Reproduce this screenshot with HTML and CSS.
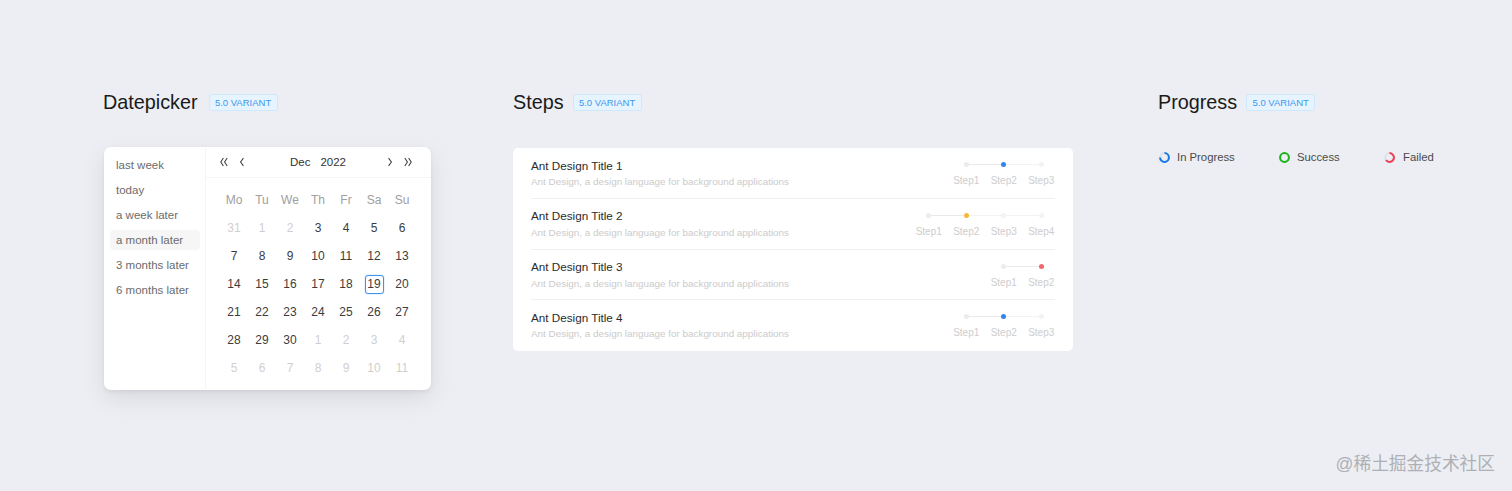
FILE: index.html
```html
<!DOCTYPE html>
<html lang="en">
<head>
  <meta charset="UTF-8">
  <title>Ant Design 5.0 variants</title>
  <link rel="stylesheet" href="styles.css">
</head>
<body>

  <div class="page">

    <section class="col col-date">
      <div class="heading">
        <h2>Datepicker</h2>
        <span class="tag">5.0 VARIANT</span>
      </div>

      <div class="picker">
        <ul class="presets">
          <li>last week</li>
          <li>today</li>
          <li>a week later</li>
          <li class="active">a month later</li>
          <li>3 months later</li>
          <li>6 months later</li>
        </ul>

        <div class="calendar">
          <div class="cal-head">
            <div class="cal-nav">
              <svg class="nav-icon" viewBox="0 0 10 10"><path d="M4.4 1 1.8 5l2.6 4M8.2 1 5.6 5l2.6 4"/></svg>
              <svg class="nav-icon" viewBox="0 0 10 10"><path d="M6.4 1.2 3.6 5l2.8 3.8"/></svg>
            </div>
            <div class="cal-title"><span>Dec</span><span>2022</span></div>
            <div class="cal-nav">
              <svg class="nav-icon" viewBox="0 0 10 10"><path d="M3.6 1.2 6.4 5 3.6 8.8"/></svg>
              <svg class="nav-icon" viewBox="0 0 10 10"><path d="M1.8 1 4.4 5 1.8 9M5.6 1 8.2 5 5.6 9"/></svg>
            </div>
          </div>

          <div class="cal-grid">
            <div class="wd">Mo</div><div class="wd">Tu</div><div class="wd">We</div><div class="wd">Th</div><div class="wd">Fr</div><div class="wd">Sa</div><div class="wd">Su</div>

            <div class="off">31</div><div class="off">1</div><div class="off">2</div><div>3</div><div>4</div><div>5</div><div>6</div>
            <div>7</div><div>8</div><div>9</div><div>10</div><div>11</div><div>12</div><div>13</div>
            <div>14</div><div>15</div><div>16</div><div>17</div><div>18</div><div><span class="today">19</span></div><div>20</div>
            <div>21</div><div>22</div><div>23</div><div>24</div><div>25</div><div>26</div><div>27</div>
            <div>28</div><div>29</div><div>30</div><div class="off">1</div><div class="off">2</div><div class="off">3</div><div class="off">4</div>
            <div class="off">5</div><div class="off">6</div><div class="off">7</div><div class="off">8</div><div class="off">9</div><div class="off">10</div><div class="off">11</div>
          </div>
        </div>
      </div>
    </section>

    <section class="col col-steps">
      <div class="heading">
        <h2>Steps</h2>
        <span class="tag">5.0 VARIANT</span>
      </div>

      <div class="list">
        <div class="row">
          <div class="row-text">
            <div class="row-title">Ant Design Title 1</div>
            <div class="row-desc">Ant Design, a design language for background applications</div>
          </div>
          <div class="steps">
            <div class="step done"><i><b></b></i><span>Step1</span></div>
            <div class="step now blue"><i><b></b></i><span>Step2</span></div>
            <div class="step"><i><b></b></i><span>Step3</span></div>
          </div>
        </div>

        <div class="row">
          <div class="row-text">
            <div class="row-title">Ant Design Title 2</div>
            <div class="row-desc">Ant Design, a design language for background applications</div>
          </div>
          <div class="steps">
            <div class="step done"><i><b></b></i><span>Step1</span></div>
            <div class="step now yellow"><i><b></b></i><span>Step2</span></div>
            <div class="step"><i><b></b></i><span>Step3</span></div>
            <div class="step"><i><b></b></i><span>Step4</span></div>
          </div>
        </div>

        <div class="row">
          <div class="row-text">
            <div class="row-title">Ant Design Title 3</div>
            <div class="row-desc">Ant Design, a design language for background applications</div>
          </div>
          <div class="steps">
            <div class="step done"><i><b></b></i><span>Step1</span></div>
            <div class="step now red"><i><b></b></i><span>Step2</span></div>
          </div>
        </div>

        <div class="row">
          <div class="row-text">
            <div class="row-title">Ant Design Title 4</div>
            <div class="row-desc">Ant Design, a design language for background applications</div>
          </div>
          <div class="steps">
            <div class="step done"><i><b></b></i><span>Step1</span></div>
            <div class="step now blue"><i><b></b></i><span>Step2</span></div>
            <div class="step"><i><b></b></i><span>Step3</span></div>
          </div>
        </div>
      </div>
    </section>

    <section class="col col-progress">
      <div class="heading">
        <h2>Progress</h2>
        <span class="tag">5.0 VARIANT</span>
      </div>

      <div class="progress">
        <div class="prog prog-active">
          <svg viewBox="0 0 12 12"><circle class="track" cx="6" cy="6" r="4.8"/><path class="blue" d="M6 1.2a4.8 4.8 0 1 1-4.8 4.8"/></svg>
          <span>In Progress</span>
        </div>
        <div class="prog prog-success">
          <svg viewBox="0 0 12 12"><circle class="green" cx="6" cy="6" r="4.8"/></svg>
          <span>Success</span>
        </div>
        <div class="prog prog-failed">
          <svg viewBox="0 0 12 12"><circle class="track" cx="6" cy="6" r="4.8"/><path class="red" d="M6 1.2a4.8 4.8 0 1 1-3.8 7.7"/></svg>
          <span>Failed</span>
        </div>
      </div>
    </section>

  </div>

  <div class="watermark">@稀土掘金技术社区</div>

</body>
</html>
```

FILE: styles.css
```css
* {
  box-sizing: border-box;
}

body {
  margin: 0;
  height: 491px;
  overflow: hidden;
  background-color: #eceef3;
  font-family: "Liberation Sans", "Noto Sans CJK SC", sans-serif;
  color: #222;
}

.page {
  display: flex;
  padding: 90px 0 0 103px;
}

.col-date {
  width: 410px;
}

.col-steps {
  width: 645px;
}

.heading {
  display: flex;
  align-items: center;
  gap: 9px;
  height: 24px;
}

h2 {
  margin: 0;
  font-size: 19.8px;
  font-weight: 400;
  color: #1a1a1a;
}

.tag {
  width: 69px;
  height: 17px;
  line-height: 15px;
  text-align: center;
  font-size: 9.5px;
  color: #3f97ec;
  background-color: #e6f4ff;
  border: 1px solid #cfe8fb;
  border-radius: 3px;
}

.col-date .tag {
  margin-left: 2px;
}

/* datepicker */

.picker {
  display: flex;
  width: 327px;
  height: 243px;
  margin: 33px 0 0 1px;
  background: #fff;
  border-radius: 7px;
  box-shadow: 0 8px 24px rgba(0, 0, 0, 0.09), 0 2px 4px rgba(0, 0, 0, 0.06);
}

.presets {
  width: 102px;
  margin: 0;
  padding: 6px 5px 0 6px;
  list-style: none;
  border-right: 1px solid #f5f5f5;
}

.presets li {
  height: 25px;
  line-height: 25px;
  padding-left: 6px;
  font-size: 11.5px;
  color: #6b6b6b;
  border-radius: 4px;
}

.presets .active {
  height: 20px;
  line-height: 20px;
  margin: 2px 0 3px;
  background-color: #f6f6f6;
}

.calendar {
  flex: 1;
}

.cal-head {
  display: flex;
  align-items: center;
  justify-content: space-between;
  height: 31px;
  padding: 0 18px 0 13px;
  border-bottom: 1px solid #f5f5f5;
}

.cal-nav {
  display: flex;
  gap: 8px;
}

.nav-icon {
  width: 10px;
  height: 10px;
  fill: none;
  stroke: #444;
  stroke-width: 1.1;
}

.cal-title {
  display: flex;
  gap: 10px;
  margin-left: 4px;
  font-size: 11.5px;
  color: #333;
}

.cal-grid {
  display: grid;
  grid-template-columns: repeat(7, 28px);
  grid-template-rows: 29px;
  grid-auto-rows: 28px;
  padding: 7px 0 0 14px;
  font-size: 12px;
  color: #3c3c3c;
}

.cal-grid > div {
  display: flex;
  align-items: center;
  justify-content: center;
}

.cal-grid .wd {
  color: #a0a0a0;
}

.cal-grid .off {
  color: #cfcfcf;
}

.cal-grid .today {
  display: flex;
  align-items: center;
  justify-content: center;
  width: 19px;
  height: 19px;
  border: 1px solid #3b93f2;
  border-radius: 3px;
  box-shadow: 0 0 1px #3b93f2;
}

/* steps */

.list {
  width: 560px;
  margin-top: 34px;
  padding: 0 18px;
  background: #fff;
  border-radius: 5px;
}

.row {
  display: flex;
  justify-content: space-between;
  height: 50.75px;
  border-bottom: 1px solid #f0f0f0;
}

.row:last-child {
  border-bottom: none;
}

.row-title {
  margin-top: 9.5px;
  font-size: 11.7px;
  line-height: 15px;
  color: #2b2b2b;
}

.row-desc {
  margin-top: 2.5px;
  font-size: 9.9px;
  line-height: 13px;
  color: #cbcbcb;
}

.steps {
  display: flex;
  margin-right: -5px;
}

.step {
  width: 37.5px;
  text-align: center;
  font-size: 10px;
  color: #cdcdcd;
}

.step i {
  display: flex;
  align-items: center;
  height: 6px;
  margin: 13.5px 0 7.5px;
}

.step i::before,
.step i::after {
  content: "";
  flex: 1;
  height: 1px;
  background-color: #f3f3f3;
}

.step b {
  width: 5px;
  height: 5px;
  border-radius: 50%;
  background-color: #f3f3f3;
}

.step.done i::after,
.step.now i::before {
  background-color: #eaeaea;
}

.step.done b {
  background-color: #ececec;
}

.step:first-child i::before,
.step:last-child i::after {
  background-color: transparent;
}

.step span {
  display: block;
  line-height: 12px;
}

.step.blue b {
  background-color: #2f86ec;
}

.step.yellow b {
  background-color: #f5b83d;
}

.step.red b {
  background-color: #f2666d;
}

/* progress */

.progress {
  display: flex;
  margin: 37px 0 0 1px;
  font-size: 11.3px;
  color: #4a4a4a;
}

.prog {
  display: flex;
  align-items: center;
  gap: 7px;
  height: 12px;
}

.prog-active {
  width: 120px;
}

.prog-success {
  width: 105px;
}

.prog-failed {
  gap: 8px;
}

.prog svg {
  width: 11px;
  height: 11px;
  fill: none;
  stroke-width: 2.2;
}

.track {
  stroke: #dde2e8;
}

.prog .blue {
  stroke: #1677e8;
}

.prog .green {
  stroke: #17b317;
}

.prog .red {
  stroke: #ee3f56;
}

.watermark {
  position: absolute;
  right: 17px;
  top: 452px;
  font-size: 17.7px;
  line-height: 24px;
  color: #aeb0b4;
}
```
